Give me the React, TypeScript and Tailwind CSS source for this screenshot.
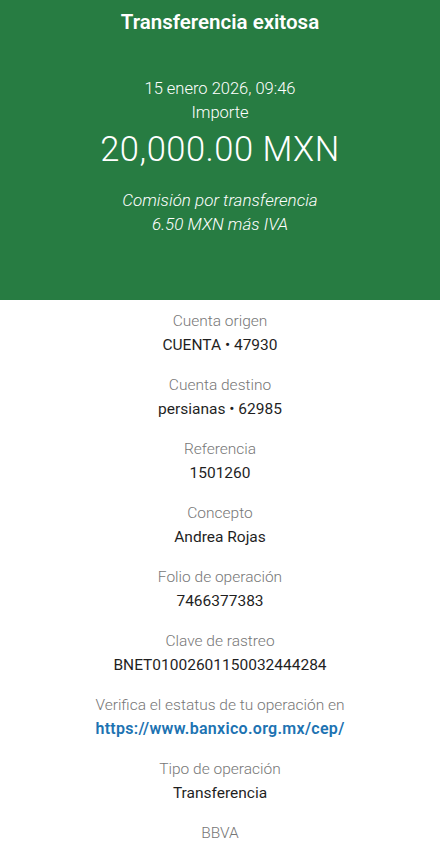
import React from "react";

const items: { label: string; value: string; link?: boolean }[] = [
  { label: "Cuenta origen", value: "CUENTA • 47930" },
  { label: "Cuenta destino", value: "persianas • 62985" },
  { label: "Referencia", value: "1501260" },
  { label: "Concepto", value: "Andrea Rojas" },
  { label: "Folio de operación", value: "7466377383" },
  { label: "Clave de rastreo", value: "BNET01002601150032444284" },
  { label: "Verifica el estatus de tu operación en", value: "https://www.banxico.org.mx/cep/", link: true },
  { label: "Tipo de operación", value: "Transferencia" },
];

export default function App() {
  return (
    <div className="w-[440px] h-[853px] overflow-hidden bg-white text-center" style={{ fontFamily: "Roboto, 'Noto Sans', sans-serif" }}>
      <div className="bg-[#277c42] text-white pt-[10px] pb-[64px]">
        <div className="text-[20.5px] leading-[24px] font-semibold">Transferencia exitosa</div>
        <div className="mt-[43px] text-[16.5px] leading-[24px] font-light">15 enero 2026, 09:46</div>
        <div className="text-[16.5px] leading-[24px] font-light">Importe</div>
        <div className="mt-[4px] text-[34.5px] leading-[40px] font-light tracking-[0.5px]">20,000.00 MXN</div>
        <div className="mt-[20px] text-[17px] leading-[23.5px] font-light italic">Comisión por transferencia</div>
        <div className="text-[17px] leading-[23.5px] font-light italic">6.50 MXN más IVA</div>
      </div>
      <div className="pt-[9px] flex flex-col gap-[16px]">
        {items.map((it) => (
          <div key={it.label}>
            <div className="text-[15.5px] leading-[24px] text-[#777777] font-light">{it.label}</div>
            <div className={it.link ? "text-[16px] leading-[24px] text-[#1d73b2] font-semibold tracking-[0.3px]" : "text-[15.5px] leading-[24px] text-[#1f1f1f]"}>{it.value}</div>
          </div>
        ))}
        <div className="text-[15.5px] leading-[24px] text-[#777777] font-light">BBVA</div>
      </div>
    </div>
  );
}
